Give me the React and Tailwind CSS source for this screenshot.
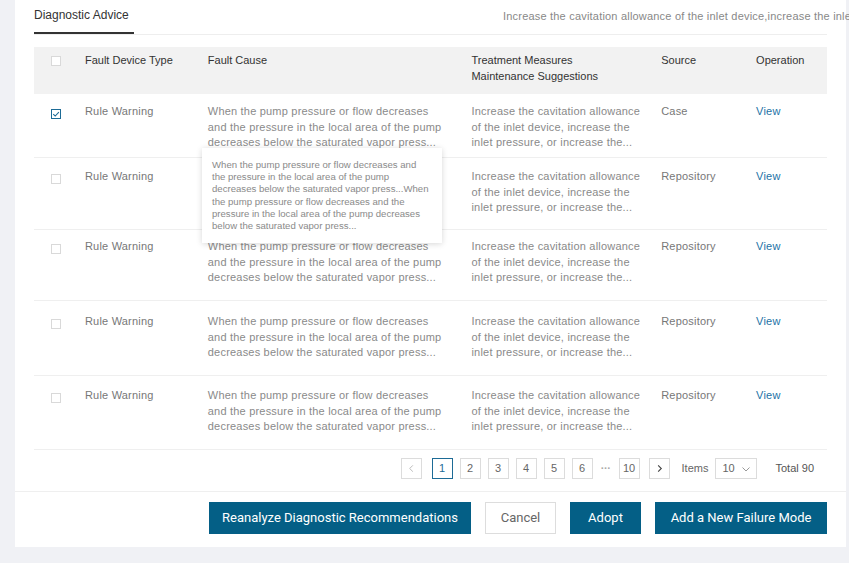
import React from "react";

const CAUSE = [
  "When the pump pressure or flow decreases",
  "and the pressure in the local area of the pump",
  "decreases below the saturated vapor press...",
];

const TREAT = [
  "Increase the cavitation allowance",
  "of the inlet device, increase the",
  "inlet pressure, or increase the...",
];

const ROWS = [
  { source: "Case", checked: true, cls: "h-[64px] pt-[10px]" },
  { source: "Repository", checked: false, cls: "h-[72px] pt-[11px]" },
  { source: "Repository", checked: false, cls: "h-[71px] pt-[9px]" },
  { source: "Repository", checked: false, cls: "h-[75px] pt-[13px]" },
  { source: "Repository", checked: false, cls: "h-[74px] pt-[12px]" },
];

const TIP = [
  "When the pump pressure or flow decreases and",
  "the pressure in the local area of the pump",
  "decreases below the saturated vapor press...When",
  "the pump pressure or flow decreases and the",
  "pressure in the local area of the pump decreases",
  "below the saturated vapor press...",
];

function Checkbox({ checked }) {
  if (checked) {
    return (
      <span className="flex h-[10px] w-[10px] items-center justify-center border border-[#1d6b96] bg-white">
        <svg viewBox="0 0 10 10" className="h-[8px] w-[8px]" fill="none" stroke="#1d6b96" strokeWidth="1.3">
          <path d="M1.5 5.2 4 7.5 8.6 2.6" />
        </svg>
      </span>
    );
  }
  return <span className="block h-[10px] w-[10px] border border-[#d9d9d9] bg-white" />;
}

function PageBox({ children, active, className = "" }) {
  return (
    <span
      className={`flex h-[21px] w-[21px] shrink-0 items-center justify-center border bg-white text-[11px] ${
        active ? "border-[#1d6b96] text-[#1d6b96]" : "border-[#dcdcdc] text-[#666]"
      } ${className}`}
    >
      {children}
    </span>
  );
}

export default function App() {
  return (
    <div className="flex h-[563px] w-[849px] overflow-hidden bg-[#f0f1f5] font-['Liberation_Sans',Arial,sans-serif]">
      <div className="w-[15px] shrink-0" />
      <div className="flex h-[547px] w-[831px] shrink-0 flex-col bg-white">
        {/* Tab header */}
        <div className="mx-[19px] flex h-[35px] items-end border-b border-[#eeeeee]">
          <div className="w-[100px] shrink-0 whitespace-nowrap border-b-2 border-[#333] pb-[9px] text-[12px] leading-[16px] text-[#333]">
            Diagnostic Advice
          </div>
          <div className="ml-[369px] shrink-0 whitespace-nowrap pb-[11px] text-[11px] leading-[14px] tracking-[0.2px] text-[#888]">
            Increase the cavitation allowance of the inlet device,increase the inlet pressure
          </div>
        </div>

        {/* Table */}
        <div className="relative mx-[19px] mt-[12px]">
          <div className="flex h-[47px] bg-[#f2f2f2] pt-[5px] text-[11px] leading-[16px] text-[#333]">
            <div className="w-[51px] pl-[17px] pt-[4px]">
              <Checkbox />
            </div>
            <div className="w-[123px]">Fault Device Type</div>
            <div className="w-[264px]">Fault Cause</div>
            <div className="w-[190px]">
              <div>Treatment Measures</div>
              <div>Maintenance Suggestions</div>
            </div>
            <div className="w-[95px]">Source</div>
            <div className="w-[71px]">Operation</div>
          </div>

          {ROWS.map((r, i) => (
            <div
              key={i}
              className={`flex border-b border-[#efefef] text-[11px] leading-[15.5px] tracking-[0.2px] ${r.cls}`}
            >
              <div className="w-[51px] pl-[17px] pt-[5px]">
                <Checkbox checked={r.checked} />
              </div>
              <div className="w-[123px] text-[#777]">Rule Warning</div>
              <div className="w-[264px] text-[#8a8a8a]">
                {CAUSE.map((l) => (
                  <div key={l} className="whitespace-nowrap">{l}</div>
                ))}
              </div>
              <div className="w-[190px] text-[#8a8a8a]">
                {TREAT.map((l) => (
                  <div key={l} className="whitespace-nowrap">{l}</div>
                ))}
              </div>
              <div className="w-[95px] text-[#777]">{r.source}</div>
              <div className="w-[71px] text-[#2372a6]">View</div>
            </div>
          ))}

          {/* Tooltip */}
          <div className="absolute left-[168px] top-[101px] h-[95px] w-[240px] bg-white pl-[10px] pt-[11px] text-[9.6px] leading-[12.2px] text-[#8a8a8a] shadow-[0_1px_6px_rgba(0,0,0,0.16)]">
            {TIP.map((l) => (
              <div key={l} className="whitespace-nowrap">{l}</div>
            ))}
          </div>
        </div>

        {/* Pagination */}
        <div className="flex h-[42px] items-start justify-end border-b border-[#efefef] pr-[32px] pt-[8px] text-[11px] text-[#666]">
          <div className="flex items-center gap-[7px]">
            <PageBox>
              <svg viewBox="0 0 10 10" className="h-[9px] w-[9px]" fill="none" stroke="#bbb" strokeWidth="1.1">
                <path d="M6.5 1.5 3 5l3.5 3.5" />
              </svg>
            </PageBox>
            <PageBox active className="ml-[3px]">1</PageBox>
            <PageBox>2</PageBox>
            <PageBox>3</PageBox>
            <PageBox>4</PageBox>
            <PageBox>5</PageBox>
            <PageBox>6</PageBox>
            <span className="w-[12px] text-center text-[11px] font-bold leading-[11px] tracking-[-0.5px] text-[#aaa]">···</span>
            <PageBox>10</PageBox>
            <PageBox className="ml-[2px]">
              <svg viewBox="0 0 10 10" className="h-[9px] w-[9px]" fill="none" stroke="#444" strokeWidth="1.2">
                <path d="M3.5 1.5 7 5 3.5 8.5" />
              </svg>
            </PageBox>
            <span className="ml-[5px] text-[#666]">Items</span>
            <span className="flex h-[21px] w-[42px] items-center justify-between border border-[#dcdcdc] pl-[6px] pr-[5px] text-[#666]">
              10
              <svg viewBox="0 0 10 10" className="h-[10px] w-[10px]" fill="none" stroke="#999" strokeWidth="1">
                <path d="M1.5 3.5 5 7l3.5-3.5" />
              </svg>
            </span>
            <span className="ml-[11px] text-[#555]">Total 90</span>
          </div>
        </div>

        {/* Footer buttons */}
        <div className="flex justify-end gap-[14px] pr-[19px] pt-[10px] font-['Roboto',sans-serif] text-[13px]">
          <button className="h-[32px] w-[262px] bg-[#045f86] text-white">Reanalyze Diagnostic Recommendations</button>
          <button className="h-[32px] w-[71px] border border-[#ddd] bg-white text-[#666]">Cancel</button>
          <button className="h-[32px] w-[71px] bg-[#045f86] text-white">Adopt</button>
          <button className="h-[32px] w-[172px] bg-[#045f86] text-white">Add a New Failure Mode</button>
        </div>
      </div>
      <div className="w-[3px] shrink-0" />
    </div>
  );
}
